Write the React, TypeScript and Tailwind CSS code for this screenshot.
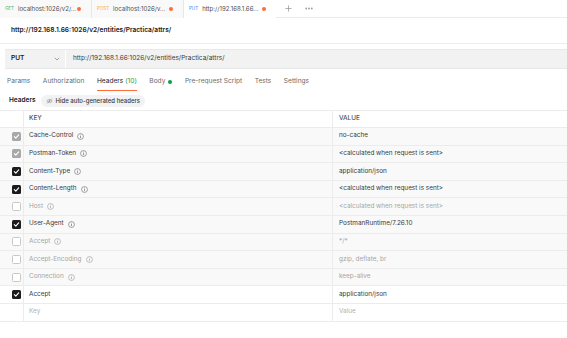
import React from "react";

type Row = {
  key: string;
  value: string;
  state: "auto" | "on" | "off";
  info: boolean;
  dim: boolean;
  bg: boolean;
};

const rows: Row[] = [
  { key: "Cache-Control", value: "no-cache", state: "auto", info: true, dim: false, bg: true },
  { key: "Postman-Token", value: "<calculated when request is sent>", state: "auto", info: true, dim: false, bg: true },
  { key: "Content-Type", value: "application/json", state: "on", info: true, dim: false, bg: true },
  { key: "Content-Length", value: "<calculated when request is sent>", state: "on", info: true, dim: false, bg: true },
  { key: "Host", value: "<calculated when request is sent>", state: "off", info: true, dim: true, bg: true },
  { key: "User-Agent", value: "PostmanRuntime/7.26.10", state: "on", info: true, dim: false, bg: true },
  { key: "Accept", value: "*/*", state: "off", info: true, dim: true, bg: true },
  { key: "Accept-Encoding", value: "gzip, deflate, br", state: "off", info: true, dim: true, bg: true },
  { key: "Connection", value: "keep-alive", state: "off", info: true, dim: true, bg: true },
  { key: "Accept", value: "application/json", state: "on", info: false, dim: false, bg: false },
];

function Check({ state }: { state: Row["state"] }) {
  if (state === "off")
    return <div className="w-[9px] h-[9px] rounded-[1.5px] border border-[#c8c8c8] bg-white" />;
  const bg = state === "auto" ? "bg-[#a8a8a8]" : "bg-[#1c1c1c]";
  return (
    <div className={`w-[9px] h-[9px] rounded-[1.5px] ${bg} flex items-center justify-center`}>
      <svg width="7" height="7" viewBox="0 0 8 8">
        <path d="M1.5 4.2 L3.2 5.8 L6.5 2.2" stroke="white" strokeWidth="1.3" fill="none" strokeLinecap="round" strokeLinejoin="round" />
      </svg>
    </div>
  );
}

function Info({ dim }: { dim: boolean }) {
  const c = dim ? "#a0a0a0" : "#707070";
  return (
    <svg width="7" height="7" viewBox="0 0 10 10" className="ml-[4px]">
      <circle cx="5" cy="5" r="4.2" stroke={c} strokeWidth="0.9" fill="none" />
      <path d="M5 4.3 V7.3" stroke={c} strokeWidth="1" />
      <circle cx="5" cy="2.8" r="0.6" fill={c} />
    </svg>
  );
}

function Tab({ method, color, label, active }: { method: string; color: string; label: string; active?: boolean }) {
  return (
    <div
      className={`flex items-center h-full pl-[5px] w-[92px] ${active ? "bg-white" : "bg-[#f9f9f9] border-r border-[#e6e6e6]"}`}
    >
      <span className={`text-[4.5px] ${color} mr-[4px] whitespace-nowrap`}>{method}</span>
      <span className="text-[6.1px] text-[#505050] whitespace-nowrap">{label}</span>
      <span className="flex-1" />
      <span className="w-[4.5px] h-[4.5px] rounded-full bg-[#ff6c37] mr-[10px]" />
    </div>
  );
}

export default function App() {
  return (
    <div
      className="w-[567px] h-[338px] bg-white overflow-hidden text-[#212121]"
      style={{ fontFamily: "Inter, 'Noto Sans', sans-serif" }}
    >
      {/* Tab bar */}
      <div className="flex h-[18px] bg-[#f9f9f9]">
        <Tab method="GET" color="text-[#31b567]" label="localhost:1026/v2/..." />
        <Tab method="POST" color="text-[#f5b13d]" label="localhost:1026/v..." />
        <Tab method="PUT" color="text-[#3d8bf2]" label="http://192.168.1.66..." active />
        <div className="flex-1 flex items-center bg-white border-b border-[#ececec] pl-[9px] gap-[13px]">
          <svg width="7" height="7" viewBox="0 0 8 8">
            <path d="M4 0.5 V7.5 M0.5 4 H7.5" stroke="#9a9a9a" strokeWidth="0.9" />
          </svg>
          <svg width="8" height="3" viewBox="0 0 8 3">
            <circle cx="1.2" cy="1.5" r="0.9" fill="#9a9a9a" />
            <circle cx="4" cy="1.5" r="0.9" fill="#9a9a9a" />
            <circle cx="6.8" cy="1.5" r="0.9" fill="#9a9a9a" />
          </svg>
        </div>
      </div>

      {/* Title */}
      <div className="h-[26px] flex items-center pl-[11px] border-b border-[#ededed]">
        <span className="text-[6.6px] font-semibold text-[#212121]">http://192.168.1.66:1026/v2/entities/Practica/attrs/</span>
      </div>

      {/* Request bar */}
      <div className="mt-[5px] ml-[5px] h-[20px] flex bg-[#f2f2f2] border-y border-[#e8e8e8]">
        <div className="w-[61px] flex items-center pl-[6px] border-r border-white">
          <span className="text-[6.6px] font-semibold text-[#212121] flex-1">PUT</span>
          <svg width="6" height="4" viewBox="0 0 6 4" className="mr-[5px]">
            <path d="M0.8 0.8 L3 3 L5.2 0.8" stroke="#8a8a8a" strokeWidth="0.8" fill="none" />
          </svg>
        </div>
        <div className="flex items-center pl-[7px]">
          <span className="text-[6.5px] text-[#3a3a3a]">http://192.168.1.66:1026/v2/entities/Practica/attrs/</span>
        </div>
      </div>

      {/* Sub tabs */}
      <div className="flex items-end h-[22px] pl-[7px] text-[6.6px] text-[#6b6b6b]">
        <div className="mr-[12.5px] pb-[4.5px]">Params</div>
        <div className="mr-[12.5px] pb-[4.5px]">Authorization</div>
        <div className="mr-[12.5px] pb-[3px] border-b-[1.5px] border-[#ff6c37] text-[#212121]">
          Headers <span className="text-[#1f9a52]">(10)</span>
        </div>
        <div className="mr-[12.5px] pb-[4.5px] flex items-center">
          Body <span className="ml-[3px] w-[4px] h-[4px] rounded-full bg-[#0a9f45]" />
        </div>
        <div className="mr-[12.5px] pb-[4.5px]">Pre-request Script</div>
        <div className="mr-[12.5px] pb-[4.5px]">Tests</div>
        <div className="pb-[4.5px]">Settings</div>
      </div>

      {/* Headers line */}
      <div className="flex items-center h-[19px] pl-[9px]">
        <span className="text-[6.5px] font-semibold text-[#212121] mr-[5px]">Headers</span>
        <div className="flex items-center h-[12px] px-[5px] rounded-[6px] bg-[#f2f2f2]">
          <svg width="7" height="6" viewBox="0 0 10 8" className="mr-[3px]">
            <path d="M1 4 C3 1 7 1 9 4 C7 7 3 7 1 4 Z" stroke="#8a8a8a" strokeWidth="0.8" fill="none" />
            <circle cx="5" cy="4" r="1.2" fill="#8a8a8a" />
            <path d="M1.5 7.5 L8.5 0.5" stroke="#8a8a8a" strokeWidth="0.8" />
          </svg>
          <span className="text-[6px] font-medium text-[#3a3a3a]">Hide auto-generated headers</span>
        </div>
      </div>

      {/* Table */}
      <div className="border-t border-[#ececec] text-[6.4px]">
        <div className="flex h-[17px] border-b border-[#ececec] bg-white">
          <div className="w-[24px] border-r border-[#ececec]" />
          <div className="w-[309px] flex items-center pl-[5px] border-r border-[#ececec] text-[#505050] font-medium">KEY</div>
          <div className="flex-1 flex items-center pl-[6px] text-[#505050] font-medium">VALUE</div>
        </div>
        {rows.map((r, i) => (
          <div key={i} className={`flex h-[17.6px] border-b border-[#ececec] ${r.bg ? "bg-[#f9f9f9]" : "bg-white"}`}>
            <div className="w-[24px] flex items-center justify-end pr-[2px] border-r border-[#ececec]">
              <Check state={r.state} />
            </div>
            <div className={`w-[309px] flex items-center pl-[5px] border-r border-[#ececec] ${r.dim ? "text-[#a6a6a6]" : "text-[#3a3a3a]"}`}>
              {r.key}
              {r.info && <Info dim={r.dim} />}
            </div>
            <div className={`flex-1 flex items-center pl-[6px] ${r.dim ? "text-[#a6a6a6]" : "text-[#3a3a3a]"}`}>{r.value}</div>
          </div>
        ))}
        <div className="flex h-[17.6px] border-b border-[#ececec] bg-white">
          <div className="w-[24px] border-r border-[#ececec]" />
          <div className="w-[309px] flex items-center pl-[5px] border-r border-[#ececec] text-[#b0b0b0]">Key</div>
          <div className="flex-1 flex items-center pl-[6px] text-[#b0b0b0]">Value</div>
        </div>
      </div>
    </div>
  );
}
